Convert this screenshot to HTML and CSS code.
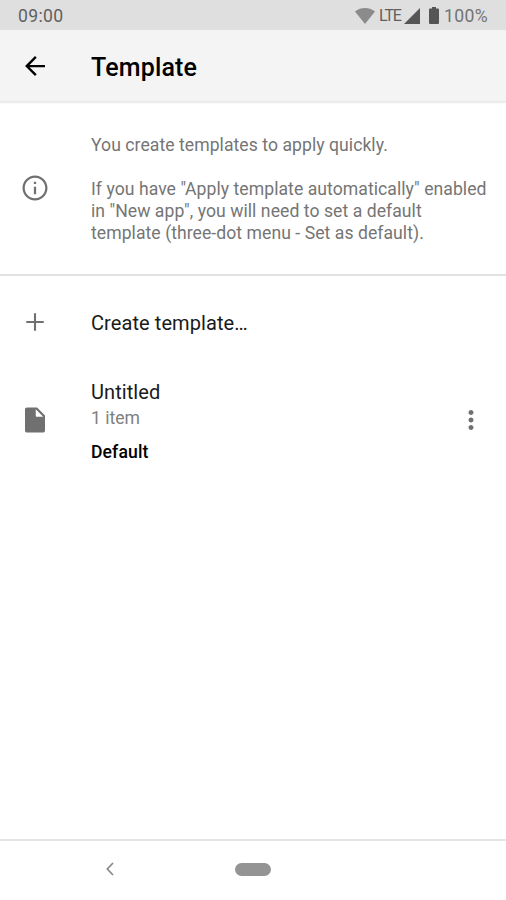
FILE: index.html
```html
<!DOCTYPE html>
<html lang="en">
<head>
<meta charset="utf-8">
<title>Template</title>
<link rel="stylesheet" href="styles.css">
</head>
<body>
<div class="screen">
  <header class="status">
    <span class="clock">09:00</span>
    <div class="indicators">
      <svg class="wifi" viewBox="0 0 20 16"><path d="M0 3.4C6-1.1 14-1.1 20 3.4L10 16Z"/></svg>
      <span class="network">LTE</span>
      <svg class="signal" viewBox="0 0 16 16"><path d="M16 0V16H0Z"/></svg>
      <svg class="battery" viewBox="0 0 10 17"><path d="M3 0H7V1.6H9Q10 1.6 10 2.6V16Q10 17 9 17H1Q0 17 0 16V2.6Q0 1.6 1 1.6H3Z"/></svg>
      <span class="percent">100%</span>
    </div>
  </header>
  <div class="toolbar">
    <div class="lead"><svg class="icon back" viewBox="0 0 24 24"><path d="M20 11.1H7.65l5.7-5.7L12 4.05 4.05 12 12 19.95l1.35-1.35-5.7-5.7H20z"/></svg></div>
    <h1>Template</h1>
  </div>
  <section class="info">
    <div class="lead"><svg class="icon" viewBox="0 0 24 24"><path d="M11.1 7h1.8v1.8h-1.8zm0 3.9h1.8v6h-1.8zM12 2C6.48 2 2 6.48 2 12s4.48 10 10 10 10-4.48 10-10S17.52 2 12 2zm0 18.2c-4.5 0-8.2-3.7-8.2-8.2s3.7-8.2 8.2-8.2 8.2 3.7 8.2 8.2-3.7 8.2-8.2 8.2z"/></svg></div>
    <div class="description">
      <p>You create templates to apply quickly.</p>
      <p class="rest">If you have "Apply template automatically" enabled<br>in "New app", you will need to set a default<br>template (three-dot menu - Set as default).</p>
    </div>
  </section>
  <main>
    <div class="row create">
      <div class="lead"><svg class="icon" viewBox="0 0 24 24"><path d="M19 12.85h-6.15V19h-1.7v-6.15H5v-1.7h6.15V5h1.7v6.15H19z"/></svg></div>
      <span class="label">Create template…</span>
    </div>
    <div class="row item">
      <div class="lead"><svg class="icon" viewBox="0 0 24 24"><path d="M5.7 2C4.6 2 4 2.7 4 3.7V20.3c0 1 .7 1.7 1.7 1.7H18.3c1 0 1.7-.7 1.7-1.7V8.3L13.7 2H5.7zM12.6 8.6V3.3L18.6 9.3H13.3Q12.6 9.3 12.6 8.6z"/></svg></div>
      <div class="details">
        <span class="label">Untitled</span>
        <span class="count">1 item</span>
        <strong>Default</strong>
      </div>
      <svg class="icon more" viewBox="0 0 24 24"><path d="M12 8c1.1 0 2-.9 2-2s-.9-2-2-2-2 .9-2 2 .9 2 2 2zm0 2c-1.1 0-2 .9-2 2s.9 2 2 2 2-.9 2-2-.9-2-2-2zm0 6c-1.1 0-2 .9-2 2s.9 2 2 2 2-.9 2-2-.9-2-2-2z"/></svg>
    </div>
  </main>
  <nav>
    <svg class="nav-back" viewBox="0 0 8 14"><path d="M7 1L1.3 7L7 13"/></svg>
    <div class="home"></div>
  </nav>
</div>
</body>
</html>
```
FILE: styles.css
```css
* { box-sizing: border-box; }
body { margin: 0; background: #fff; font-family: Roboto, "Liberation Sans", sans-serif; }
h1, p { margin: 0; }
svg { display: block; flex: none; }
.screen { width: 506px; height: 900px; display: flex; flex-direction: column; overflow: hidden; }
.status { height: 30px; background: #dfdfdf; display: flex; justify-content: space-between; align-items: center; padding: 1px 18px 0 18px; color: #5f5f5f; font-size: 17.6px; line-height: 20px; }
.clock { letter-spacing: .35px; }
.indicators { display: flex; align-items: center; }
.wifi { width: 20px; height: 16px; fill: #8b8b8b; }
.network { font-size: 16px; margin-left: 4px; width: 25px; letter-spacing: -1.1px; }
.signal { width: 16px; height: 16px; fill: #555; }
.battery { width: 10px; height: 17px; margin: 0 5px 0 9px; fill: #555; }
.percent { letter-spacing: .35px; color: #737373; }
.toolbar { height: 72px; background: #f4f4f4; border-bottom: 1px solid #e8e8e8; box-shadow: 0 1px 2px #e8e8e8; display: flex; align-items: center; }
.lead { width: 91px; padding-left: 20.4px; flex: none; }
.icon { width: 30px; height: 30px; fill: #707070; }
.back { fill: #000; }
h1 { padding-top: 4px; font-size: 25px; line-height: 30px; font-weight: 500; letter-spacing: .15px; }
.info { height: 174px; border-bottom: 2px solid #e2e2e2; display: flex; align-items: center; }
.description { padding-top: 2px; color: #757575; font-size: 17.6px; line-height: 22px; letter-spacing: .05px; white-space: nowrap; }
.rest { margin-top: 22px; }
.row { display: flex; align-items: center; }
.create { height: 92px; }
.create .label { padding-top: 1px; }
.label { font-size: 20px; line-height: 26px; letter-spacing: .08px; color: #1a1a1a; }
.item { height: 104px; padding-right: 20px; }
.details { flex: 1; display: flex; flex-direction: column; padding-top: 1px; }
.count { font-size: 17.6px; line-height: 26px; color: #808080; }
strong { margin-top: 10px; font-size: 17.6px; line-height: 22px; font-weight: 500; letter-spacing: .1px; color: #000; }
nav { margin-top: auto; height: 61px; border-top: 2px solid #e4e4e4; display: flex; align-items: center; padding: 0 0 3px 106px; }
.nav-back { width: 8px; height: 14px; fill: none; stroke: #888; stroke-width: 1.7; }
.home { margin-left: 121px; width: 36px; height: 13px; border-radius: 7px; background: #949494; }
```
